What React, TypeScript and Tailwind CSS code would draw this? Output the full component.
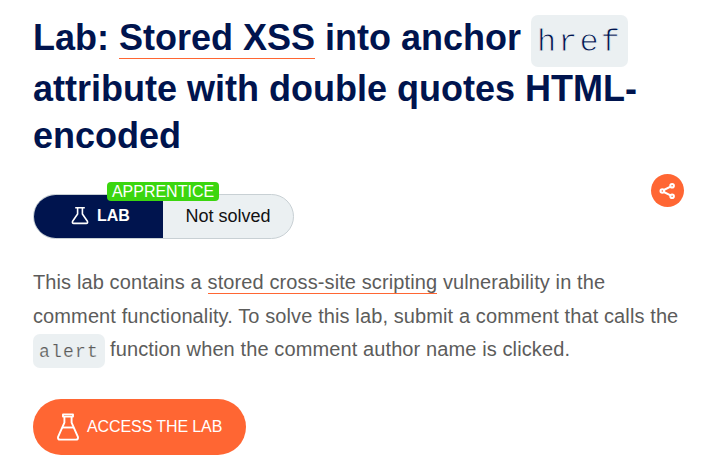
function SmallFlask() {
  return (
    <svg className="h-[18px] w-[18px]" viewBox="0 0 18 18" fill="none" stroke="white" strokeWidth="1.6" strokeLinejoin="round">
      <path d="M4.2 .8h9.6M6.6 1v6L1.6 14.2Q.9 16.4 2.7 16.4h12.6q1.8 0 1.1-2.2L11.4 7V1" />
    </svg>
  );
}

function LargeFlask() {
  return (
    <svg className="h-[28px] w-[22px] shrink-0" viewBox="0 0 22 28" fill="none" stroke="white" strokeWidth="1.9" strokeLinejoin="round">
      <path d="M6 1.4h10v2.2H6zM7.4 3.5v6.2L1.2 23.6q-.9 3 2 3h15.6q2.9 0 2-3L14.6 9.7V3.5" />
      <path d="M5 14.5h12" />
    </svg>
  );
}

export default function App() {
  return (
    <main className="h-[463px] w-[706px] overflow-hidden bg-white pt-[15px] pl-[33px] font-['Liberation_Sans',Arial,sans-serif]">
      <h1 className="text-[36px] font-bold whitespace-nowrap text-[#00144e]">
        <div className="flex h-[52px] items-start">
          <span className="leading-[45px]">Lab:&nbsp;</span>
          <a className="h-[44px] border-b border-[#ff6633] leading-[45px]">Stored XSS</a>
          <span className="leading-[45px]">&nbsp;into anchor&nbsp;</span>
          <code className="h-[52px] w-[97px] rounded-[7px] bg-[#ebf0f2] pl-[6px] font-['Liberation_Mono',monospace] text-[32px] leading-[55px] font-normal tracking-[2px] [-webkit-text-stroke:0.9px_#ebf0f2]">href</code>
        </div>
        <div className="h-[47px] leading-[43px]">attribute with double quotes HTML-</div>
        <div className="h-[47px] leading-[43px]">encoded</div>
      </h1>
      <div className="mt-[13px] flex h-[65px] items-start justify-between pr-[22px]">
        <div className="relative mt-[20px] flex h-[45px] w-[261px] rounded-full border border-[#c8d0d4] bg-[#ebf0f2]">
          <div className="flex w-[129px] items-center rounded-l-full bg-[#00144e] pb-[2px] pl-[37px] text-[16px] font-bold text-white">
            <SmallFlask /><span className="ml-[8px]">LAB</span>
          </div>
          <div className="flex flex-1 items-center justify-center pb-px text-[18px] text-[#111]">Not solved</div>
          <div className="absolute -top-[13px] left-[73px] h-[19px] w-[112px] rounded bg-[#3bd60f] text-center text-[16px] leading-[19px] text-white">APPRENTICE</div>
        </div>
        <button className="flex h-[33px] w-[33px] items-center justify-center rounded-full bg-[#ff6633]">
          <svg className="h-[18px] w-[18px]" viewBox="0 0 18 18" fill="none" stroke="white" strokeWidth="2">
            <path d="m4.8 8 6.8-3.3M4.8 10l6.8 3.3" />
            <circle cx="3.3" cy="9" r="1.8" />
            <circle cx="13.1" cy="3.7" r="1.8" />
            <circle cx="13.1" cy="14.3" r="1.8" />
          </svg>
        </button>
      </div>
      <div className="mt-[27px] text-[20px] tracking-[0.11px] whitespace-nowrap text-[#5c5c5b]">
        <p className="h-[33px] leading-[33px]">This lab contains a <a className="inline-block h-[28px] border-b border-[#ff6633] align-top">stored cross-site scripting</a> vulnerability in the</p>
        <p className="h-[35px] leading-[35px]">comment functionality. To solve this lab, submit a comment that calls the</p>
        <p className="flex h-[34px] leading-[31px]"><code className="mr-[5px] w-[72px] rounded-[7px] bg-[#ebf0f2] pl-[6px] font-['Liberation_Mono',monospace] text-[18px] leading-[36px] tracking-[1.2px] [-webkit-text-stroke:0.2px_#ebf0f2]">alert</code>function when the comment author name is clicked.</p>
      </div>
      <button className="mt-[31px] flex h-[56px] w-[213px] items-center rounded-full bg-[#ff6633] pl-[24px] text-[16px] tracking-[-0.1px] text-white">
        <LargeFlask /><span className="ml-[8px] whitespace-nowrap">ACCESS THE LAB</span>
      </button>
    </main>
  );
}
